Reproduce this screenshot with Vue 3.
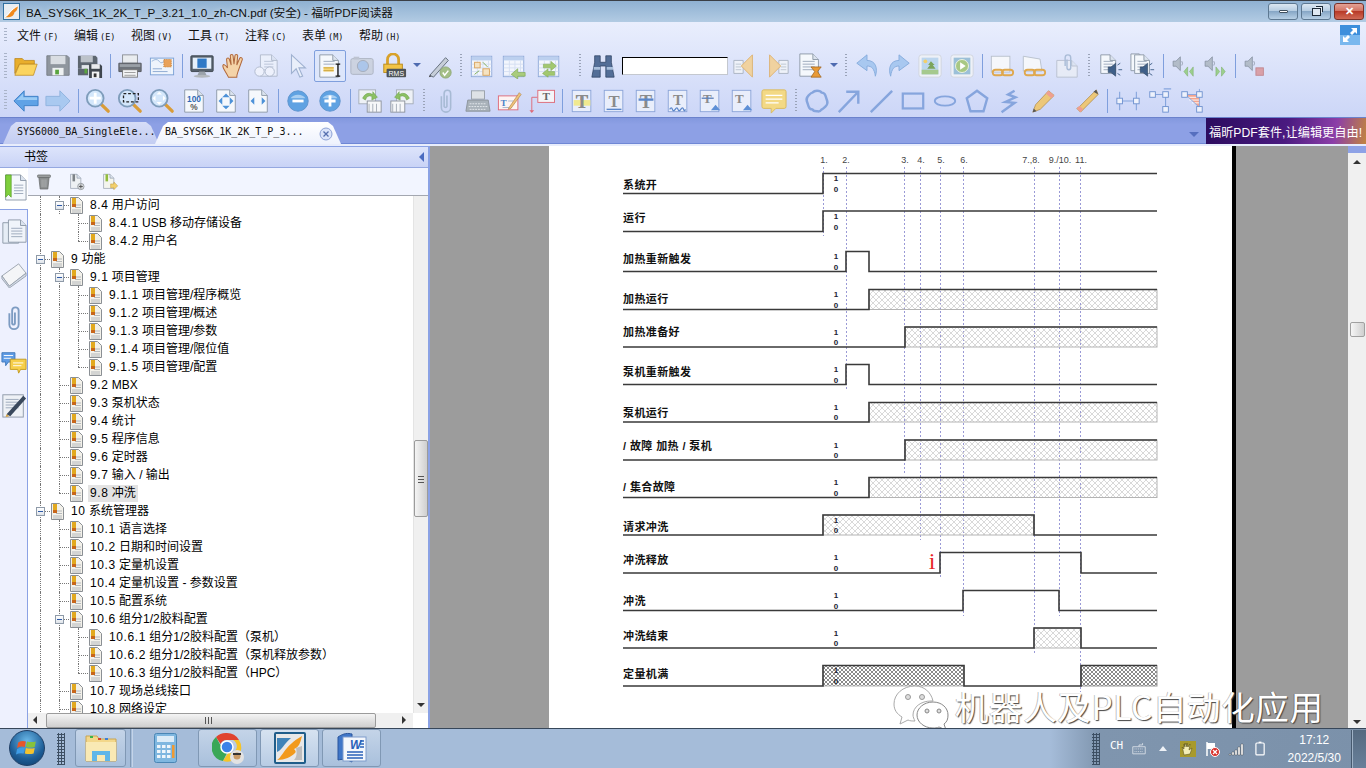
<script setup>
// --- small svg builders for the toolbar icons (28 x 28 grid)
const doc = (x, y, w, h, fill = '#f5f8fc', line = '#8d98a8') =>
  `<path d="M${x} ${y}h${w - 6}l6 6v${h - 6}h-${w}z" fill="${fill}" stroke="${line}"/><path d="M${x + w - 6} ${y}v6h6" fill="#dbe3ee" stroke="${line}"/>`
const rows = (x, y, w, n, c = '#9aa8ba', st = 3) =>
  Array.from({ length: n }, (_, i) => `<path d="M${x} ${y + i * st}h${w}" stroke="${c}"/>`).join('')
const mag = (inner = '') =>
  `<path d="M17 17l8 8" stroke="#d99c38" stroke-width="3.5" stroke-linecap="round"/><circle cx="11" cy="11" r="9" fill="#d4e7fb" stroke="#7f9dbb" stroke-width="2"/>${inner}`
const table = (extra = '') =>
  `<rect x="2.5" y="3.5" width="22" height="22" fill="#f3f6fd" stroke="#8fa9d8"/><rect x="3" y="4" width="21" height="4" fill="#bcd0ef"/>${rows(3, 12, 21, 4, '#d5dff2', 4)}<path d="M9 8v17M15 8v17M21 8v17" stroke="#d5dff2"/>${extra}`
const tbtn = (extra = '', size = 20, y = 21, x = 14) =>
  `<rect x="3.5" y="2.5" width="20" height="23" fill="#e9eefb" stroke="#8ca5d8"/><text x="${x}" y="${y}" font-size="${size}" font-family="Liberation Serif" font-weight="700" text-anchor="middle" fill="#8b8b8b">T</text>${extra}`
const circ = (c, inner) =>
  `<circle cx="14" cy="14" r="11" fill="${c}" stroke="#5d93cc"/><path d="M6 11a9 7 0 0 1 16 0z" fill="#a9cff2"/>${inner}`
const speaker = () =>
  `<g transform="translate(1 1) scale(.78)"><path d="M3 10h4l6-6v19l-6-6H3z" fill="#b2bcc8" stroke="#7f8b9a"/><path d="M15 10q2 3 0 6" stroke="#7f8b9a" fill="none"/></g>`
const pageSpeak = (x) =>
  `${doc(x, 2, 16, 20)}${rows(x + 3, 9, 10, 4)}<path d="M11 15h3l5-4v14l-5-4h-3z" fill="#3f5f88" stroke="#283d5a" stroke-width=".6"/><path d="M21 13l3-2M22 18h4M21 22l3 2" stroke="#3f5f88"/>`
const bluePath = (d, extra = '') =>
  `<path d="${d}" fill="none" stroke="#86a5dd" stroke-width="2.6" ${extra}/>`
const chain = `<rect x="4" y="18" width="11" height="6" rx="3" fill="none" stroke="#dfa84e" stroke-width="2"/><rect x="14" y="18" width="12" height="6" rx="3" fill="none" stroke="#dfa84e" stroke-width="2"/>`

const icons = {
  folder: `<path d="M2 22V6h8l2 2h11v4H7z" fill="#e8ae2c" stroke="#b98317" stroke-width=".8"/><path d="M2 24l5-12h19l-4 12z" fill="#fbd45f" stroke="#c08a1d" stroke-width=".8"/>`,
  save: `<path d="M2 3h22l2 2v19H2z" fill="#8f969e" stroke="#777e86"/><rect x="6" y="3" width="16" height="9" fill="#d9dde2"/><rect x="8" y="16" width="12" height="8" fill="#eef1f2"/><rect x="11" y="18" width="4" height="5" fill="#58a43d"/>`,
  saveall: `<path d="M1 3h19l2 2v12H1z" fill="#5d6670"/><rect x="4" y="3" width="13" height="7" fill="#bcc2c9"/><rect x="5" y="13" width="10" height="11" fill="#e2e6ea"/><path d="M1 17v7h11v-7" fill="#5d6670"/><rect x="8" y="17" width="3" height="5" fill="#5aa53e"/><path d="M13 12h12l2 2v13H13z" fill="#3f464e"/><rect x="15.5" y="12" width="9" height="5" fill="#e9ebee"/><rect x="16" y="20" width="8" height="7" fill="#f2f3f4"/><rect x="18" y="22" width="3" height="4" fill="#333"/>`,
  print: `<rect x="6" y="2" width="16" height="9" fill="#e9ecef" stroke="#8b8f95"/><path d="M2 11h24v9H2z" fill="#6f747b" stroke="#55595f"/><rect x="3" y="12" width="22" height="3" fill="#9aa0a7"/><rect x="6" y="18" width="16" height="8" fill="#f4f5f6" stroke="#777"/><path d="M8 21h12M8 24h12" stroke="#999"/>`,
  mail: `<rect x="1.5" y="5.5" width="25" height="18" fill="#eef4fc" stroke="#7ba1d4"/><path d="M3 9q5-4 8 0t6-2" fill="none" stroke="#98b3d9"/><rect x="16" y="7" width="8" height="8" fill="#e9a25a" stroke="#c87d32" stroke-dasharray="1 1"/><path d="M4 17h10M4 20h16" stroke="#8aa7d0"/>`,
  monitor: `<rect x="2" y="3" width="24" height="17" rx="1" fill="#56616c" stroke="#3f4750"/><rect x="4" y="5" width="20" height="12" fill="#e6f0fb"/><rect x="9" y="6" width="10" height="10" fill="#2f79c6"/><path d="M11 20h6l2 4H9z" fill="#9aa2aa"/><ellipse cx="14" cy="25" rx="9" ry="1.6" fill="#b3b8bd"/>`,
  hand: `<path d="M8 26C5 20 2 17 2 14s3-1 5 2L6 7c0-2 3-2 3 0l2 6-1-10c0-2 3-2 3 0l1 9 1-9c0-2 3-2 3 0l-1 10 3-7c1-2 3-1 3 1l-4 11c-1 3-2 5-2 8z" fill="#f4d3a8" stroke="#b0683c" stroke-width="1.1"/>`,
  glasses: `<g opacity=".55">${doc(8, 2, 18, 23)}${rows(12, 9, 10, 4)}<circle cx="7" cy="20" r="5" fill="#fff" stroke="#8d98a8"/><circle cx="18" cy="20" r="5" fill="#fff" stroke="#8d98a8"/></g>`,
  cursor: `<path d="M7 2l15 14h-7l4 9-3 1-4-9-5 5z" fill="#e9effa" stroke="#9fb1d0" stroke-width="1.2"/>`,
  select: `${doc(3, 2, 20, 24)}${rows(7, 9, 12, 2)}<rect x="7" y="15" width="11" height="5" fill="#f7d677"/>${rows(7, 16, 11, 2, '#c9a33d')}<path d="M20 12h5M20 25h5M22.5 12v13" stroke="#111" stroke-width="1.3"/>`,
  camera: `<g opacity=".6"><rect x="2" y="6" width="24" height="17" rx="2" fill="#c2c8d0" stroke="#8e959e"/><circle cx="15" cy="14" r="6" fill="#8db3e0" stroke="#7f8790"/><rect x="5" y="4" width="6" height="3" fill="#a8aeb6"/></g>`,
  lock: `<path d="M7 13V7a6 6 0 0 1 12 0v6" fill="none" stroke="#d8a12a" stroke-width="3"/><rect x="3" y="12" width="20" height="9" fill="#f2c345" stroke="#b98a1c"/><rect x="6" y="17" width="21" height="9" rx="1" fill="#4d5358"/><text x="16.5" y="24.6" font-size="7.5" font-family="Liberation Sans" text-anchor="middle" fill="#fff">RMS</text>`,
  pen: `<path d="M3 24L20 5l3 3L7 26z" fill="#c6ced8" stroke="#5f6a78"/><path d="M3 24l-1 2 3-1" fill="#333"/><circle cx="20" cy="21" r="6" fill="#a4bf88" stroke="#8fa874"/><path d="M17 21l2 3 4-5" fill="none" stroke="#fff" stroke-width="1.6"/>`,
  fit: table(`<rect x="6" y="10" width="6" height="6" fill="#f6e3c2" stroke="#d9a45f"/><rect x="15" y="17" width="7" height="7" fill="#f6e3c2" stroke="#d9a45f"/><path d="M15 10l5 5M6 23l5-4" stroke="#7bab52"/>`),
  addcol: table(`<path d="M26 21h-8v-4l-7 6 7 5v-3h8z" fill="#a9cc7c" stroke="#7fa854" stroke-width=".7"/>`),
  swap: table(`<path d="M8 12h8V9l6 5-6 5v-3H8zM20 20h-7v-3l-6 5 6 4v-2h7z" fill="#a2c86f" stroke="#7fa854" stroke-width=".6"/>`),
  binoc: `<path d="M5 3h6v7h6V3h6v7l3 16h-9V14h-6v12H2l3-16z" fill="#536e97" stroke="#2e4263" stroke-width=".8"/><path d="M4 15h7v3H4zM18 15h7v3h-7z" fill="#aac0dc"/>`,
  prev: `<g opacity=".9"><path d="M2 8h10v14H2z" fill="#f1f4f9" stroke="#a5afbc"/>${rows(4, 12, 6, 3, '#b9c2cd')}<path d="M22 2v24L10 14z" fill="#f3d196" stroke="#dcae66"/></g>`,
  next: `<g opacity=".9"><path d="M16 8h10v14H16z" fill="#f1f4f9" stroke="#a5afbc"/>${rows(18, 12, 6, 3, '#b9c2cd')}<path d="M6 2v24l12-12z" fill="#f3d196" stroke="#dcae66"/></g>`,
  dochour: `${doc(2, 1, 20, 24)}${rows(5, 9, 13, 4)}<path d="M14 15h11l-4 5 4 6H14l4-6z" fill="#e99a35" stroke="#9c6420" stroke-width=".8"/>`,
  undo: `<path d="M14 2L3 11l11 8v-5c5 0 8 3 9 11 3-9 0-17-9-17z" fill="#a8c8f0" stroke="#86acdc"/>`,
  redo: `<path d="M14 2l11 9-11 8v-5c-5 0-8 3-9 11-3-9 0-17 9-17z" fill="#a8c8f0" stroke="#86acdc"/>`,
  image: `<rect x="2" y="2" width="24" height="24" rx="3" fill="#eef1f7" stroke="#cfd5df"/><rect x="5" y="5" width="18" height="18" fill="#bcd6ee"/><circle cx="9" cy="9" r="2" fill="#f3cf6a"/><path d="M5 18h18v5H5z" fill="#a5c98d"/><path d="M15 9l4 4h-2l3 4h-9l3-4h-2z" fill="#7ba45b"/>`,
  play: `<rect x="2" y="2" width="24" height="24" rx="3" fill="#eef1f7" stroke="#cfd5df"/><rect x="5" y="5" width="18" height="18" fill="#9cc0d8"/><circle cx="14" cy="14" r="7" fill="#a8c884" stroke="#eef4e4"/><path d="M12 10l6 4-6 4z" fill="#fff"/>`,
  link1: `<rect x="2.5" y="3.5" width="20" height="17" fill="#f5f7fb" stroke="#b8c0cc"/>${chain}`,
  link2: `<path d="M2.500 3.500l18 3 2 13h-20z" fill="#f5f7fb" stroke="#b8c0cc"/>${chain}`,
  clipdoc: `<g opacity=".65">${doc(3, 8, 22, 18, '#eef1f5', '#a7afba')}<path d="M12 14V5a3 3 0 0 1 6 0v11a2 2 0 0 1-4 0V7" fill="none" stroke="#8ea7c4" stroke-width="1.5"/></g>`,
  speak1: pageSpeak(3),
  speak2: `${doc(1, 1, 15, 18)}${pageSpeak(5)}`,
  rew: `${speaker()}<path d="M19 15l-4 5 4 5zM25 15l-4 5 4 5z" fill="#9bcf8c" stroke="#7cae6c" stroke-width=".6"/>`,
  ffw: `${speaker()}<path d="M15 15l4 5-4 5zM21 15l4 5-4 5z" fill="#9bcf8c" stroke="#7cae6c" stroke-width=".6"/>`,
  stop: `${speaker()}<rect x="15" y="16" width="8" height="8" fill="#d9a0a8" stroke="#c28891"/>`,

  back: `<path d="M12 3L1 14l11 11v-6h15V9H12z" fill="#5fa2e6" stroke="#3f7fc6"/><path d="M11 6L4 13h22v-3H11z" fill="#9acbf5"/>`,
  fwd: `<path d="M16 3l11 11-11 11v-6H1V9h15z" fill="#a9c9f0" stroke="#8fb2de"/>`,
  zoomin: mag(`<path d="M11 5v12M5 11h12" stroke="#fff" stroke-width="3"/>`),
  marquee: mag(`<rect x="7" y="6" width="16" height="9" fill="none" stroke="#222" stroke-dasharray="3 2" stroke-width="1.4"/>`),
  zoomfit: mag(`<path d="M11 4l3 3H8zM11 18l3-3H8zM4 11l3-3v6zM18 11l-3-3v6z" fill="#fff"/>`),
  pct: `${doc(4, 2, 20, 24)}<text x="14" y="15" font-size="9" font-weight="700" font-family="Liberation Sans" text-anchor="middle" fill="#2f68b4">100</text><text x="14" y="24" font-size="9" font-weight="700" font-family="Liberation Sans" text-anchor="middle" fill="#555">%</text>`,
  fitpage: `${doc(4, 2, 20, 24)}<path d="M14 6l4 4h-8zM14 23l4-4h-8zM6 14l4-4v8zM22 14l-4-4v8z" fill="#4d92d8"/>`,
  fitwidth: `${doc(4, 2, 20, 24)}<path d="M6 14l4-4v8zM22 14l-4-4v8z" fill="#4d92d8"/>`,
  minus: circ('#5fa2e2', `<rect x="8" y="12.5" width="12" height="3" fill="#fff"/>`),
  plus: circ('#5fa2e2', `<path d="M14 8v12M8 14h12" stroke="#fff" stroke-width="3"/>`),
  exp1: `<rect x="2" y="2" width="18" height="15" fill="#eef1f6" stroke="#a5adb8"/><rect x="11" y="14" width="15" height="12" fill="#f6f7f9" stroke="#8c939c"/><path d="M13 17v9M17 17v9M21 17v9" stroke="#a5adb8"/><path d="M6 11q4-8 11-4V4l5 6-6 3V9q-5-2-7 4z" fill="#8cc064" stroke="#5f9a3e" stroke-width=".5"/>`,
  exp2: `<rect x="8" y="2" width="18" height="15" fill="#eef1f6" stroke="#a5adb8"/><rect x="2" y="14" width="15" height="12" fill="#f6f7f9" stroke="#8c939c"/><path d="M4 17v9M8 17v9M12 17v9" stroke="#a5adb8"/><path d="M22 11q-4-8-11-4V4l-5 6 6 3V9q5-2 7 4z" fill="#8cc064" stroke="#5f9a3e" stroke-width=".5"/>`,
  clip: `<path d="M9 9v12a5 5 0 0 0 10 0V6a3.500 3.500 0 0 0-7 0v14a1.600 1.600 0 0 0 3 0V8" fill="none" stroke="#a7bad4" stroke-width="1.7"/>`,
  typewriter: `<rect x="7" y="3" width="14" height="9" fill="#dee2e6" stroke="#98a0a8"/><path d="M3 13h22l2 12H1z" fill="#a9b2ba" stroke="#8b949c"/><path d="M5 17h18M4 20h20M5 23h18" stroke="#e6ebee" stroke-dasharray="2 1"/>`,
  textbox: `<rect x="1.5" y="8.5" width="21" height="15" fill="#fdf4f3" stroke="#dd6a78"/><text x="7" y="19" font-size="10" font-weight="700" font-family="Liberation Serif" text-anchor="middle" fill="#4d83c9">T</text><path d="M12 14h6M6 21h10" stroke="#a8b7cc"/><path d="M13 21L24 5l2 2-11 15-3 1z" fill="#efc27a" stroke="#a87a3a" stroke-width=".6"/>`,
  callout: `<rect x="9.5" y="2.5" width="18" height="13" fill="#f4f5f8" stroke="#dd6a78"/><text x="18.5" y="13" font-size="12" font-weight="700" font-family="Liberation Serif" text-anchor="middle" fill="#666">T</text><path d="M9 10H3v15" fill="none" stroke="#dd6a78"/><path d="M0.5 24h5l-2.5 3z" fill="#dd6a78"/>`,
  t1: tbtn(`<rect x="5" y="13" width="18" height="6" fill="#f1e77c" opacity=".85"/><text x="14" y="21" font-size="20" font-family="Liberation Serif" font-weight="700" text-anchor="middle" fill="#8b8b8b">T</text>`),
  t2: tbtn(`<path d="M6 23h16" stroke="#5b86c9" stroke-width="1.5"/>`, 18, 20),
  t3: tbtn(`<path d="M6 12.5h16" stroke="#5b86c9" stroke-width="2.5"/>`),
  t4: tbtn(`<path d="M5 23q2-3 3 0t3 0 3 0 3 0 3 0 2 0" fill="none" stroke="#5b86c9" stroke-width="1.4"/>`, 16, 18),
  t5: tbtn(`<path d="M5 11h13" stroke="#5b7fb8" stroke-width="1.4"/><path d="M15 24l5-6 5 6z" fill="#5d8fd6"/>`, 14, 16, 11),
  t6: tbtn(`<path d="M15 24l5-6 5 6z" fill="#5d8fd6"/>`, 14, 16, 11),
  note: `<path d="M3 2h22a2 2 0 0 1 2 2v16a2 2 0 0 1-2 2h-9l-5 5v-5H3a2 2 0 0 1-2-2V4a2 2 0 0 1 2-2z" fill="#f3d985" stroke="#d8b95f"/><path d="M5 8h18M5 12h18M5 16h14" stroke="#fff" stroke-width="1.4"/>`,
  cloud: `<path d="M14 3q4 0 5 2 3 0 4 3t2 6q1 3-2 6t-4 3q-2 3-5 2-4 0-5-2-3 0-4-3T3 14q-1-3 2-6t4-3q2-2 5-2z" fill="none" stroke="#86a5dd" stroke-width="2.6"/>`,
  arrow: bluePath('M3 26L24 4M11 4h13v13'),
  line: bluePath('M3 26L26 3'),
  rect: `<rect x="3" y="6" width="22" height="16" fill="none" stroke="#86a5dd" stroke-width="2.4"/>`,
  ellipse: `<ellipse cx="14" cy="14" rx="11" ry="5" fill="none" stroke="#86a5dd" stroke-width="2"/>`,
  pentagon: bluePath('M14 3l11 8-4 14H7L3 11z'),
  zig: `<path d="M6 26l14-10-10-1 11-5-8-3 7-4" fill="none" stroke="#86a5dd" stroke-width="2.6"/>`,
  pencil: `<path d="M3 26l3-8L20 3l6 5-15 15z" fill="#ecc778" stroke="#a7803c" stroke-width=".7"/><path d="M20 3l6 5-3 3-6-5z" fill="#ef9f90"/><path d="M3 26l1-4 3 3z" fill="#555"/>`,
  pencil2: `<path d="M3 22l4 4L26 7l-2-5L6 20z" fill="#ecc778" stroke="#a7803c" stroke-width=".7"/><path d="M3 22l4 4 3-3-4-4z" fill="#ef9f90"/><path d="M26 7l-2-5-3 2z" fill="#555"/>`,
  dist: `<path d="M5 4v20M23 4v20M7 14h14" stroke="#86a5dd" stroke-width="1.2"/><rect x="2" y="11" width="6" height="6" fill="#eef2fc" stroke="#6f92cf"/><rect x="20" y="11" width="6" height="6" fill="#eef2fc" stroke="#6f92cf"/>`,
  perim: `<path d="M6 7h15M18 1h8M20 7v16" stroke="#86a5dd" stroke-width="1.2"/><rect x="3" y="4" width="6" height="6" fill="#eef2fc" stroke="#6f92cf"/><rect x="17" y="4" width="6" height="6" fill="#eef2fc" stroke="#6f92cf"/><rect x="17" y="20" width="6" height="6" fill="#eef2fc" stroke="#6f92cf"/>`,
  area: `<path d="M7 7h15v14z" fill="#f3a48f"/><path d="M8 10h14M11 13h11M14 16h8" stroke="#fff"/><path d="M7 7h15M22 1v21M7 7l15 14" stroke="#86a5dd"/><rect x="3" y="4" width="6" height="6" fill="#eef2fc" stroke="#6f92cf"/><rect x="19" y="4" width="6" height="6" fill="#eef2fc" stroke="#6f92cf"/><rect x="19" y="20" width="6" height="6" fill="#eef2fc" stroke="#6f92cf"/>`,
  trash: `<path d="M6 7h16l-2 18H8z" fill="#8b8e8f" stroke="#5f6263"/><rect x="4" y="3" width="20" height="4" rx="1" fill="#9a9d9e" stroke="#5f6263"/><path d="M11 10v12M14 10v12M17 10v12" stroke="#bfc2c3"/>`,
  bmAdd: `${doc(4, 2, 16, 22, '#eef1f4')}<rect x="7" y="2" width="4" height="11" fill="#7c8287"/><circle cx="20" cy="21" r="5" fill="#d5d8dc" stroke="#80868c"/><path d="M20 18v6M17 21h6" stroke="#555" stroke-width="1.5"/>`,
  bmGo: `${doc(4, 2, 16, 22, '#f4f5ee')}<rect x="7" y="2" width="4" height="11" fill="#92bd3e"/><path d="M15 17h5v-3l6 6-6 6v-3h-5z" fill="#f3cf6c" stroke="#b7922e" stroke-width=".7"/>`,
  railBm: `${doc(5, 1, 22, 27)}${rows(14, 12, 10, 4)}<path d="M5 1h6v24l-3-3-3 3z" fill="#7fcf3d" stroke="#4f9a1c" stroke-width=".7"/>`,
  railPages: `${doc(2, 4, 17, 22, '#e6edf6')}${doc(8, 1, 19, 24, '#f0f4fa')}${rows(11, 10, 12, 4)}`,
  railLayers: `<path d="M1 15L19 2l8 10-18 14z" fill="#f4f5f7" stroke="#9aa3ae"/><path d="M1 15l8 11 18-14v3L9 28 1 18z" fill="#d5ddea" stroke="#9aa3ae"/>`,
  railClip: `<path d="M9 9v12a5 5 0 0 0 10 0V6a3.500 3.500 0 0 0-7 0v14a1.600 1.600 0 0 0 3 0V8" fill="none" stroke="#7d9cc2" stroke-width="2"/>`,
  railNote: `<path d="M1 4h14v10H8l-3 4v-4H1z" fill="#5f9ce6" stroke="#3f78bb"/><path d="M3 7h10M3 10h8" stroke="#fff"/><path d="M10 11h17v11h-6l-2 4-1-4h-8z" fill="#f6cf4a" stroke="#c49a1f"/><path d="M13 15h11M13 18h9" stroke="#fff"/>`,
  railEdit: `<rect x="2" y="3" width="22" height="24" fill="#eef1f6" stroke="#8d98a8"/>${rows(5, 8, 14, 4)}<path d="M6 24L24 4l3 3L10 26z" fill="#39485c"/><path d="M6 24l-1 3 4-1z" fill="#d6a03a"/>`,
}

const I = (i) => ({ i })
const gap = (w) => ({ gap: w })
const sep = { sep: true }
const dots = (w) => ({ dots: true, w })
const caret = { caret: true }

const toolbarOne = [
  I('folder'), I('save'), I('saveall'), sep, I('print'), I('mail'), sep, I('monitor'), I('hand'), I('glasses'), I('cursor'),
  { i: 'select', on: true }, I('camera'), I('lock'), caret, I('pen'), dots(10), I('fit'), I('addcol'), gap(3), I('swap'),
  gap(8), dots(14), I('binoc'), { input: true }, gap(1), I('prev'), I('next'), gap(2), I('dochour'), caret, dots(10), I('undo'), I('redo'),
  gap(-1), I('image'), I('play'), sep, I('link1'), I('link2'), gap(1), I('clipdoc'), dots(12), I('speak1'), I('speak2'),
  sep, I('rew'), I('ffw'), sep, I('stop'),
]
const toolbarTwo = [
  I('back'), I('fwd'), sep, I('zoomin'), I('marquee'), I('zoomfit'), I('pct'), I('fitpage'), I('fitwidth'), sep, I('minus'), I('plus'),
  sep, I('exp1'), I('exp2'), dots(12), I('clip'), I('typewriter'), I('textbox'), I('callout'), sep, I('t1'), I('t2'), I('t3'), I('t4'),
  I('t5'), I('t6'), I('note'), dots(11), I('cloud'), I('arrow'), I('line'), I('rect'), I('ellipse'), I('pentagon'), I('zig'), gap(2),
  I('pencil'), gap(12), I('pencil2'), sep, gap(1), I('dist'), I('perim'), I('area'),
]

const menus = [['文件', '(F)'], ['编辑', '(E)'], ['视图', '(V)'], ['工具', '(T)'], ['注释', '(C)'], ['表单', '(M)'], ['帮助', '(H)']]

const railItems = ['railPages', 'railLayers', 'railClip', 'railNote', 'railEdit']

// g = tree guide cells: l line, t tee, e end, b expanded box, n nothing
const tree = [
  { t: '8.4 用户访问', g: 'lb' },
  { t: '8.4.1 USB 移动存储设备', g: 'lnt' },
  { t: '8.4.2 用户名', g: 'lne' },
  { t: '9 功能', g: 'b' },
  { t: '9.1 项目管理', g: 'lb' },
  { t: '9.1.1 项目管理/程序概览', g: 'llt' },
  { t: '9.1.2 项目管理/概述', g: 'llt' },
  { t: '9.1.3 项目管理/参数', g: 'llt' },
  { t: '9.1.4 项目管理/限位值', g: 'llt' },
  { t: '9.1.5 项目管理/配置', g: 'lle' },
  { t: '9.2 MBX', g: 'lt' },
  { t: '9.3 泵机状态', g: 'lt' },
  { t: '9.4 统计', g: 'lt' },
  { t: '9.5 程序信息', g: 'lt' },
  { t: '9.6 定时器', g: 'lt' },
  { t: '9.7 输入 / 输出', g: 'lt' },
  { t: '9.8 冲洗', g: 'le', on: true },
  { t: '10 系统管理器', g: 'b' },
  { t: '10.1 语言选择', g: 'lt' },
  { t: '10.2 日期和时间设置', g: 'lt' },
  { t: '10.3 定量机设置', g: 'lt' },
  { t: '10.4 定量机设置 - 参数设置', g: 'lt' },
  { t: '10.5 配置系统', g: 'lt' },
  { t: '10.6 组分1/2胶料配置', g: 'lb' },
  { t: '10.6.1 组分1/2胶料配置（泵机）', g: 'llt' },
  { t: '10.6.2 组分1/2胶料配置（泵机释放参数）', g: 'llt' },
  { t: '10.6.3 组分1/2胶料配置（HPC）', g: 'lle' },
  { t: '10.7 现场总线接口', g: 'lt' },
  { t: '10.8 网络设定', g: 'lt' },
].map((r) => {
  const num = r.t.split(' ')[0]
  return { ...r, num, rest: r.t.slice(num.length) }
})

// timing chart, drawn in screen coordinates through the viewBox
const wave = (hi, lo, edges) => {
  let d = `M623 ${lo}`
  let up = false
  for (const x of edges) {
    d += `H${x}V${up ? lo : hi}`
    up = !up
  }
  return d + 'H1157'
}
const signals = [
  { label: '系统开', ly: 184, hi: 173.5, lo: 193.5, e: [823] },
  { label: '运行', ly: 217, hi: 211, lo: 231.5, e: [823] },
  { label: '加热重新触发', ly: 258, hi: 251.5, lo: 271.5, e: [846, 869] },
  { label: '加热运行', ly: 298, hi: 289.5, lo: 309.5, e: [869], h: [869, 1157] },
  { label: '加热准备好', ly: 331, hi: 327, lo: 347, e: [905], h: [905, 1157] },
  { label: '泵机重新触发', ly: 371, hi: 364.5, lo: 384.5, e: [846, 869] },
  { label: '泵机运行', ly: 412, hi: 402.5, lo: 422, e: [869], h: [869, 1157] },
  { label: '/ 故障 加热 / 泵机', ly: 445, hi: 440, lo: 460, e: [905], h: [905, 1157] },
  { label: '/ 集合故障', ly: 486, hi: 477.5, lo: 497.5, e: [869], h: [869, 1157] },
  { label: '请求冲洗', ly: 526, hi: 515, lo: 535, e: [823, 1034], h: [823, 1034] },
  { label: '冲洗释放', ly: 559, hi: 552.5, lo: 573, e: [940, 1081] },
  { label: '冲洗', ly: 600, hi: 590.5, lo: 610.5, e: [963, 1059] },
  { label: '冲洗结束', ly: 635, hi: 628, lo: 648, e: [1034, 1081], h: [1034, 1081] },
  { label: '定量机满', ly: 673, hi: 665.5, lo: 686, e: [823, 964, 1081], h: [823, 964], h2: [1081, 1157], dense: true },
].map((s) => ({ ...s, d: wave(s.hi, s.lo, s.e) }))

const markers = [
  { x: 823.5, end: 236, t: '1.', tx: 824 },
  { x: 846.5, end: 390, t: '2.', tx: 846 },
  { x: 904.5, end: 473, t: '3.', tx: 905 },
  { x: 920.5, end: 540, t: '4.', tx: 921 },
  { x: 940.5, end: 579, t: '5.', tx: 941 },
  { x: 963.5, end: 616, t: '6.', tx: 964 },
  { x: 1034.5, end: 653, t: '7.,8.', tx: 1031 },
  { x: 1059.5, end: 616, t: '9./10.', tx: 1060 },
  { x: 1080.5, end: 692, t: '11.', tx: 1081 },
]
</script>

<template>
  <div class="app">
    <div class="titlebar">
      <svg class="appicon" viewBox="0 0 18 18">
        <rect x=".5" y=".5" width="17" height="17" fill="#e9eef2" stroke="#2a6a9c" />
        <path d="M2 15C6 15 7 8 16 3c-1 5-2 6-4 7 0 3-4 6-10 5z" fill="#f08a1d" />
        <path d="M2 15C6 12 8 7 16 3" fill="none" stroke="#fff" stroke-width="1" />
      </svg>
      <span class="title">BA_SYS6K_1K_2K_T_P_3.21_1.0_zh-CN.pdf (安全) - 福昕PDF阅读器</span>
      <div class="winbtns">
        <button class="wb"><i class="minbar"></i></button>
        <button class="wb"><i class="restore"></i></button>
        <button class="wb close"><span>✕</span></button>
      </div>
    </div>

    <div class="toolbars">
      <div class="menubar">
        <i class="grip"></i>
        <div v-for="m in menus" :key="m[0]" class="menu">{{ m[0] }}<small>{{ m[1] }}</small></div>
        <div class="expand">
          <svg viewBox="0 0 20 20" width="20" height="20">
            <rect width="20" height="20" fill="#3d8fdc" />
            <rect y="10" width="20" height="10" fill="#7ab8ee" />
            <path d="M11 3h6v6l-2-2-3 3-2-2 3-3zM9 17H3v-6l2 2 3-3 2 2-3 3z" fill="#fff" />
          </svg>
        </div>
      </div>

      <div v-for="(bar, n) in [toolbarOne, toolbarTwo]" :key="n" class="toolbar" :class="n ? 'two' : 'one'">
        <i class="grip"></i>
        <template v-for="(it, k) in bar" :key="k">
          <div v-if="it.i" class="tool" :class="{ on: it.on }"><svg viewBox="0 0 28 28" width="26" height="26" v-html="icons[it.i]"></svg></div>
          <i v-else-if="it.sep" class="sep"></i>
          <i v-else-if="it.dots" class="tdots" :style="{ width: it.w + 'px' }"></i>
          <i v-else-if="it.caret" class="caret"></i>
          <div v-else-if="it.input" class="findbox"></div>
          <i v-else class="tgap" :style="{ marginLeft: it.gap + 'px' }"></i>
        </template>
      </div>
    </div>

    <div class="tabbar">
      <div class="tab">SYS6000_BA_SingleEle...</div>
      <div class="tab active">
        BA_SYS6K_1K_2K_T_P_3...
        <svg class="tabx" viewBox="0 0 14 14" width="14" height="14">
          <circle cx="7" cy="7" r="6" fill="#dbe4fa" stroke="#8ea3d6" />
          <path d="M4.500 4.500l5 5M9.500 4.500l-5 5" stroke="#556fae" stroke-width="1.3" />
        </svg>
      </div>
      <i class="tabmore"></i>
      <div class="promo">福昕PDF套件,让编辑更自由!</div>
    </div>

    <div class="main">
      <aside class="side">
        <div class="sidehead">
          <span>书签</span>
          <i class="collapse"></i>
        </div>
        <div class="sidebody">
          <div class="rail">
            <div class="railtab"><svg viewBox="0 0 28 28" width="26" height="28" v-html="icons.railBm"></svg></div>
            <div v-for="r in railItems" :key="r" class="railitem"><svg viewBox="0 0 28 28" width="26" height="26" v-html="icons[r]"></svg></div>
          </div>
          <div class="panel">
            <div class="paneltools">
              <svg viewBox="0 0 28 28" width="18" height="18" v-html="icons.trash"></svg>
              <svg viewBox="0 0 28 28" width="18" height="18" v-html="icons.bmAdd"></svg>
              <svg viewBox="0 0 28 28" width="18" height="18" v-html="icons.bmGo"></svg>
            </div>
            <div class="treewrap">
              <div class="tree">
                <div v-for="row in tree" :key="row.t" class="row">
                  <i v-for="(c, k) in row.g" :key="k" class="cell" :class="'c-' + c"><b v-if="c === 'b'"></b></i>
                  <svg class="bm" viewBox="0 0 13 17" width="13" height="17">
                    <path d="M.5.5h8l4 4v12H.5z" fill="#f3f1ea" stroke="#8a8f94" />
                    <path d="M5 8h6M5 10.500h6M2 13h9M2 15h9" stroke="#b4b8bc" />
                    <rect x="2" y="1" width="4" height="9" fill="#e2a91f" />
                    <rect x="2" y="7" width="4" height="3" fill="#c8661a" />
                  </svg>
                  <span class="label" :class="{ on: row.on }"><span class="num">{{ row.num }}</span>{{ row.rest }}</span>
                </div>
              </div>
              <div class="vbar">
                <i class="thumb-v"></i>
                <i class="arr-down"></i>
              </div>
            </div>
            <div class="hbar">
              <i class="arr-left"></i>
              <i class="thumb-h"></i>
              <i class="arr-right"></i>
            </div>
          </div>
        </div>
      </aside>

      <div class="docarea">
        <div class="gutter left"></div>
        <div class="page">
          <svg class="chart" viewBox="549 146 683 582" width="683" height="582">
            <defs>
              <pattern id="hatch" width="6" height="6" patternUnits="userSpaceOnUse">
                <path d="M0 0l6 6M6 0L0 6" stroke="#cfcfcf" stroke-width=".8" />
              </pattern>
              <pattern id="hatchDense" width="4" height="4" patternUnits="userSpaceOnUse">
                <path d="M0 0l4 4M4 0L0 4" stroke="#8a8a8a" stroke-width="1" />
              </pattern>
            </defs>
            <g v-for="m in markers" :key="m.t">
              <path :d="`M${m.x} 167V${m.end}`" class="mark" />
              <text :x="m.tx" y="163" class="marktext">{{ m.t }}</text>
            </g>
            <g v-for="s in signals" :key="s.label">
              <rect
                v-if="s.h"
                :x="s.h[0]"
                :y="s.hi"
                :width="s.h[1] - s.h[0]"
                :height="s.lo - s.hi"
                :fill="s.dense ? 'url(#hatchDense)' : 'url(#hatch)'"
                stroke="#b4b4b4"
              />
              <rect
                v-if="s.h2"
                :x="s.h2[0]"
                :y="s.hi"
                :width="s.h2[1] - s.h2[0]"
                :height="s.lo - s.hi"
                fill="url(#hatchDense)"
                stroke="#999"
              />
              <path :d="s.d" class="trace" />
              <text x="623" :y="s.ly + 5" class="siglabel">{{ s.label }}</text>
              <text x="836" :y="s.hi + 7.5" class="bit">1</text>
              <text x="836" :y="s.lo - 2" class="bit">0</text>
            </g>
            <text x="932" y="569" class="redi">i</text>
          </svg>
        </div>
        <div class="blackline"></div>
        <div class="gutter right"></div>
        <div class="docscroll">
          <i class="topcap"></i>
          <i class="arr-up"></i>
          <i class="thumb-doc"></i>
          <i class="arr-down big"></i>
        </div>

        <div class="watermark">
          <svg viewBox="0 0 56 46" width="56" height="46">
            <path d="M22 2C10 2 1 10 1 20c0 6 3 10 8 13l-2 7 8-4c2 1 4 1 7 1-1-2-2-4-2-6 0-8 8-14 18-14h2C38 8 31 2 22 2z" fill="#fff" stroke="#aaa" />
            <path d="M40 18c-9 0-16 6-16 13s7 13 16 13c2 0 4 0 6-1l7 3-2-6c3-2 4-5 4-9 0-7-6-13-15-13z" fill="#fff" stroke="#888" />
            <circle cx="15" cy="13" r="2.5" fill="#ddd" stroke="#999" /><circle cx="29" cy="13" r="2.5" fill="#ddd" stroke="#999" />
            <circle cx="34" cy="27" r="2" fill="#ddd" stroke="#888" /><circle cx="46" cy="27" r="2" fill="#ddd" stroke="#888" />
          </svg>
          <span>机器人及PLC自动化应用</span>
        </div>
      </div>
    </div>

    <footer class="taskbar">
      <div class="orb">
        <svg viewBox="0 0 20 20" width="22" height="22">
          <path d="M2 5q3-2 7-1l-1 5q-4-1-7 1z" fill="#e8562a" />
          <path d="M10 4q4 1 8 0l-1 5q-4 1-8 0z" fill="#86c23c" />
          <path d="M1 11q3-2 7-1l-1 5q-4-1-7 1z" fill="#3f9ce6" />
          <path d="M9 10q4 1 8 0l-1 5q-4 1-8 0z" fill="#f4c32e" />
        </svg>
      </div>
      <i class="tbdots"></i>
      <div class="tbtn wide">
        <svg viewBox="0 0 34 30" width="34" height="30">
          <path d="M2 7V3h11l2 3h17v22H2z" fill="#f3d78a" stroke="#c8a453" />
          <rect x="6" y="3" width="3" height="2" fill="#3cb44a" /><rect x="14" y="5" width="3" height="2" fill="#d9442e" /><rect x="21" y="5" width="3" height="2" fill="#3c7fd9" />
          <path d="M2 9h30v19H2z" fill="#f9e9b4" />
          <path d="M8 28V18h18v10h-5v-6h-8v6z" fill="#5fb6e8" />
        </svg>
      </div>
      <i class="tbsep"></i>
      <div class="tbtn plain">
        <svg viewBox="0 0 24 30" width="24" height="30">
          <rect x=".5" y=".5" width="22" height="29" rx="2" fill="#7fb7e0" stroke="#4a86b5" />
          <rect x="3" y="3" width="17" height="6" fill="#dcecf8" />
          <g fill="#f0f6fb"><rect x="3" y="12" width="3.5" height="3" /><rect x="8" y="12" width="3.5" height="3" /><rect x="13" y="12" width="3.5" height="3" /><rect x="3" y="17" width="3.5" height="3" /><rect x="8" y="17" width="3.5" height="3" /><rect x="13" y="17" width="3.5" height="3" /><rect x="3" y="22" width="3.5" height="3" /><rect x="8" y="22" width="3.5" height="3" /><rect x="13" y="22" width="3.5" height="3" /></g>
          <rect x="18" y="12" width="2.5" height="13" fill="#f09a32" />
        </svg>
      </div>
      <div class="tbtn">
        <svg viewBox="0 0 32 32" width="32" height="32">
          <path d="M15 1A14 14 0 0 1 27 8H15a7 7 0 0 0-6.500 4L4 5A14 14 0 0 1 15 1z" fill="#e0432f" />
          <path d="M4 5l6 11a6 6 0 0 0 5 5l-4 8A14 14 0 0 1 4 5z" fill="#3aa757" />
          <path d="M27 8a14 14 0 0 1-16 21l5-8a7 7 0 0 0 5-13z" fill="#f6c428" />
          <circle cx="15" cy="15" r="6" fill="#3c82e8" stroke="#fff" stroke-width="1.5" />
          <circle cx="25" cy="25" r="7" fill="#e2e2e2" />
          <circle cx="25" cy="24" r="3.500" fill="#c99a66" />
          <rect x="21" y="21" width="8" height="2" fill="#333" />
        </svg>
      </div>
      <div class="tbtn active">
        <svg viewBox="0 0 32 32" width="32" height="32">
          <rect x="1" y="1" width="30" height="30" rx="1" fill="#e8e8e8" stroke="#1f5d8a" stroke-width="2" />
          <path d="M3 28C8 26 10 14 28 4c-2 8-3 11-8 13 2 2 2 3 1 4-4 4-10 7-18 7z" fill="#f29a1c" />
          <path d="M3 20c4-1 7-8 14-14H3z" fill="#3f83b8" />
          <path d="M22 16l6-2v14h-8c3-3 3-8 2-12z" fill="#bdbdbd" />
        </svg>
      </div>
      <div class="tbtn">
        <svg viewBox="0 0 32 32" width="32" height="32">
          <path d="M2 5C8 1 12 1 16 2v28C10 27 6 27 2 28z" fill="#3f76c8" stroke="#2a559c" />
          <rect x="7" y="5" width="23" height="24" fill="#f4f7fc" stroke="#7e9ccb" />
          <text x="14" y="17" font-size="12" font-weight="700" font-style="italic" font-family="Liberation Sans" fill="#2a62b8">W</text>
          <path d="M11 20h16M11 23h16M11 26h16M24 9h4M24 12h4M24 15h4" stroke="#2a62b8" stroke-width="1.4" />
        </svg>
      </div>

      <div class="tray">
        <i class="tbdots"></i>
        <span class="ch">CH</span>
        <svg viewBox="0 0 18 14" width="16" height="13">
          <path d="M2 5h14v8H2zM9 5V3h4V1" fill="none" stroke="#d8dee6" />
          <path d="M4 7.500h10M4 10.500h10" stroke="#d8dee6" stroke-dasharray="1 1" />
        </svg>
        <i class="trayup"></i>
        <svg viewBox="0 0 16 16" width="16" height="16">
          <rect width="16" height="16" fill="#a89a2c" />
          <path d="M4 14L3 9 2 6l2 2V3l1 3V2l2 4V2l1 4 2-3-1 6 3-2-2 6z" fill="#f4eeb4" stroke="#4d4618" stroke-width=".5" />
        </svg>
        <svg viewBox="0 0 16 16" width="16" height="16">
          <path d="M3 1v14" stroke="#fff" stroke-width="1.500" />
          <path d="M3 2h8v6H3z" fill="#fff" />
          <circle cx="11" cy="11" r="4.500" fill="#d9302a" stroke="#fff" />
          <path d="M9 9l4 4M13 9l-4 4" stroke="#fff" stroke-width="1.300" />
        </svg>
        <svg viewBox="0 0 16 14" width="16" height="14">
          <path d="M1 12h2v1H1zM4 10h2v3H4zM7 8h2v5H7zM10 5h2v8h-2zM13 2h2v11h-2z" fill="#fff" stroke="#444" stroke-width=".4" />
        </svg>
        <svg class="battery" viewBox="0 0 12 16" width="11" height="15">
          <rect x="1" y="2" width="9" height="13" rx="1" fill="none" stroke="#fff" stroke-width="1.300" />
          <rect x="4" y="0.500" width="3" height="1.500" fill="#fff" />
        </svg>
        <div class="clock">
          <div>17:12</div>
          <div>2022/5/30</div>
        </div>
        <i class="showdesk"></i>
      </div>
    </footer>
  </div>
</template>

<style scoped>
.app {
  width: 1366px;
  height: 768px;
  display: flex;
  flex-direction: column;
  overflow: hidden;
  font-family: "Liberation Sans", "Noto Sans CJK SC", sans-serif;
  font-size: 12px;
  color: #000;
  background: #fff;
}
i { display: block; font-style: normal; }

.titlebar {
  height: 22px;
  flex: none;
  display: flex;
  align-items: center;
  box-sizing: border-box;
  border-top: 1px solid #3a3f46;
  padding-left: 2px;
  background: linear-gradient(#8fb1d2, #b2cbe3);
}
.appicon { width: 17px; height: 17px; margin-left: 1px; }
.title {
  margin-left: 6px;
  font-size: 11.7px;
  color: #101010;
  text-shadow: 0 0 6px rgba(255, 255, 255, .6);
  white-space: nowrap;
}
.winbtns { margin-left: auto; margin-right: 2px; display: flex; gap: 3px; }
.wb {
  width: 30px;
  height: 17px;
  padding: 0;
  box-sizing: border-box;
  display: flex;
  align-items: center;
  justify-content: center;
  border: 1px solid #5d7891;
  border-radius: 3px;
  background: linear-gradient(#dbe7f2 0, #b6cde2 45%, #87a7c6 50%, #b8d0e6 100%);
}
.wb.close {
  border-color: #7a3128;
  background: linear-gradient(#e4a295 0, #d27464 45%, #b83a28 50%, #d06a55 100%);
  color: #fff;
  font-size: 11px;
  font-weight: 700;
  line-height: 1;
}
.minbar { width: 9px; height: 3px; background: #fff; border: 1px solid #40505f; box-sizing: border-box; border-radius: 1px; }
.restore { width: 9px; height: 8px; border: 1px solid #1d2a38; box-shadow: 2px -2px 0 -1px #e8f0f7, 3px -3px 0 -1px #1d2a38; box-sizing: border-box; background: #dfe9f3; }

.toolbars {
  flex: none;
  background: linear-gradient(#e9eefd, #ccd6f7);
  border-bottom: 1px solid #6b82cc;
}
.menubar { height: 25px; display: flex; align-items: center; padding-left: 10px; position: relative; }
.grip {
  position: absolute;
  left: 4px;
  top: 6px;
  bottom: 6px;
  width: 3px;
  background: repeating-linear-gradient(#a9b3c8 0 1px, transparent 1px 3px);
}
.menu { width: 57px; padding-left: 7px; box-sizing: border-box; font-size: 12px; white-space: nowrap; color: #111; }
.menu small { font-family: "DejaVu Sans Mono", monospace; font-size: 8.5px; margin-left: 2px; }
.expand { position: absolute; right: 6px; top: 3px; height: 20px; }

.toolbar { display: flex; align-items: center; padding-left: 10px; position: relative; }
.toolbar.one { height: 37px; }
.toolbar.two { height: 33px; }
.tool {
  width: 32px;
  height: 32px;
  flex: none;
  display: flex;
  align-items: center;
  justify-content: center;
  box-sizing: border-box;
}
.tool.on { border: 1px solid #7f9fdd; border-radius: 2px; background: #dde6fb; }
.sep { width: 8px; height: 24px; flex: none; background: linear-gradient(#7f9fdd, #7f9fdd) center / 1px 100% no-repeat; }
.tdots {
  flex: none;
  height: 24px;
  background: repeating-linear-gradient(#9aa3b8 0 1px, transparent 1px 3px) center / 2px 100% no-repeat;
}
.caret { flex: none; width: 14px; height: 5px; position: relative; }
.caret::after {
  content: "";
  position: absolute;
  left: 3px;
  top: 0;
  border: 4px solid transparent;
  border-top: 4px solid #4e6bb0;
  border-bottom: 0;
}
.tgap { flex: none; width: 0; }
.findbox {
  flex: none;
  width: 106px;
  height: 18px;
  margin-left: 3px;
  box-sizing: border-box;
  background: #fff;
  border: 1px solid #c4c8cf;
  border-top: 1px solid #000;
  border-left: 1px solid #000;
}

.tabbar {
  height: 28px;
  flex: none;
  display: flex;
  position: relative;
  box-sizing: border-box;
  background: linear-gradient(#8398de, #8da0e5 25%);
  border-bottom: 2px solid #e8edfc;
  box-shadow: inset 0 -1px 0 #6f87d5;
  padding-top: 4px;
  padding-left: 3px;
}
.tab {
  position: relative;
  z-index: 0;
  width: 156px;
  height: 22px;
  padding: 4px 0 0 14px;
  box-sizing: border-box;
  font-family: "DejaVu Sans Mono", monospace;
  font-size: 10px;
  white-space: nowrap;
  color: #111;
}
.tab::before {
  content: "";
  position: absolute;
  inset: 0;
  z-index: -1;
  clip-path: polygon(0 100%, 8px 4px, 13px 0, calc(100% - 13px) 0, calc(100% - 8px) 4px, 100% 100%);
  background: linear-gradient(#d6ddf7, #c3cdf2);
}
.tab.active { width: 186px; margin-left: -4px; padding-left: 10px; z-index: 1; }
.tab.active::before { background: linear-gradient(#fff, #eef2fd); }
.tabx { position: absolute; left: 164px; top: 5px; }
.tabmore {
  position: absolute;
  left: 1189px;
  top: 14px;
  border: 5px solid transparent;
  border-top: 5px solid #566fbf;
  border-bottom: 0;
}
.promo {
  position: absolute;
  right: 0;
  top: 0;
  width: 160px;
  height: 26px;
  box-sizing: border-box;
  padding: 5px 0 0 3px;
  background: linear-gradient(100deg, #2b0c5e 0, #4a1a80 50%, #8c3ea8 80%, #c1843f 100%);
  color: #fff;
  font-size: 12.2px;
  white-space: nowrap;
  overflow: hidden;
}

.main { flex: none; height: 582px; display: flex; }
.side { width: 430px; flex: none; display: flex; flex-direction: column; background: #eef1fe; border-right: 2px solid #8ba2e4; box-sizing: border-box; }
.sidehead {
  height: 22px;
  flex: none;
  display: flex;
  align-items: center;
  padding: 0 0 3px 24px;
  font-size: 12px;
  position: relative;
  box-sizing: border-box;
  background: linear-gradient(#dde4fb, #c9d3f6);
  border-bottom: 1px solid #95a8e0;
  border-top: 1px solid #8ba2e4;
}
.collapse {
  position: absolute;
  right: 4px;
  top: 5px;
  border: 5px solid transparent;
  border-right: 5px solid #4a6bc0;
  border-left: 0;
}
.sidebody { flex: 1; display: flex; min-height: 0; }
.rail { width: 27px; flex: none; border-right: 1px solid #8ba2e4; box-sizing: content-box; }
.railtab {
  width: 28px;
  height: 42px;
  background: #fff;
  display: flex;
  align-items: center;
  justify-content: center;
  box-sizing: border-box;
  border-bottom: 1px solid #8ba2e4;
  padding-bottom: 3px;
}
.railitem { height: 43.4px; display: flex; align-items: center; justify-content: center; }
.panel { flex: 1; min-width: 0; display: flex; flex-direction: column; background: #fff; }
.paneltools {
  height: 28px;
  flex: none;
  display: flex;
  align-items: center;
  gap: 15px;
  padding-left: 7px;
  background: #f2f5ff;
  border-bottom: 1px solid #a3a7b0;
  box-sizing: border-box;
}
.treewrap { flex: 1; min-height: 0; display: flex; }
.tree { flex: 1; min-width: 0; overflow: hidden; padding-left: 3px; }
.row { height: 18px; display: flex; align-items: center; white-space: nowrap; }
.cell { width: 19px; height: 18px; flex: none; position: relative; }
.c-l::before, .c-t::before, .c-e::before, .c-b::before {
  content: "";
  position: absolute;
  left: 9px;
  top: 0;
  bottom: 0;
  border-left: 1px dotted #777;
}
.c-e::before { bottom: 9px; }
.c-t::after, .c-e::after, .c-b::after {
  content: "";
  position: absolute;
  left: 9px;
  right: 0;
  top: 9px;
  border-top: 1px dotted #777;
}
.c-b b {
  position: absolute;
  z-index: 1;
  left: 5px;
  top: 5px;
  width: 9px;
  height: 9px;
  box-sizing: border-box;
  border: 1px solid #8e9aa8;
  background: linear-gradient(#fff, #dfe4ea);
}
.c-b b::after {
  content: "";
  position: absolute;
  left: 1px;
  right: 1px;
  top: 3px;
  height: 1px;
  background: #2e5aa8;
}
.bm { flex: none; margin-left: 1px; }
.label { margin: 1px 0 0 5px; padding: 0 2px; line-height: 17px; font-size: 12px; }
.label.on { background: #e3e3e3; }
.num { letter-spacing: .6px; }
.vbar { width: 15px; flex: none; background: #f0f0f0; position: relative; border-left: 1px solid #e4e4e4; box-sizing: border-box; }
.thumb-v {
  position: absolute;
  left: 0;
  right: 0;
  top: 244px;
  height: 77px;
  border: 1px solid #9b9b9b;
  border-radius: 2px;
  box-sizing: border-box;
  background: linear-gradient(90deg, #f4f4f4, #cfcfcf);
}
.thumb-v::after {
  content: "";
  position: absolute;
  left: 3px;
  right: 3px;
  top: 35px;
  height: 7px;
  background: repeating-linear-gradient(#555 0 1px, transparent 1px 3px);
}
.arr-down {
  position: absolute;
  left: 3px;
  bottom: 6px;
  border: 4px solid transparent;
  border-top: 4px solid #333;
  border-bottom: 0;
}
.hbar { height: 15px; flex: none; background: #f0f0f0; position: relative; margin-right: 15px; }
.thumb-h {
  position: absolute;
  left: 18px;
  width: 330px;
  top: 0;
  bottom: 0;
  border: 1px solid #9b9b9b;
  border-radius: 2px;
  box-sizing: border-box;
  background: linear-gradient(#f4f4f4, #cfcfcf);
}
.thumb-h::after {
  content: "";
  position: absolute;
  left: 158px;
  width: 7px;
  top: 3px;
  bottom: 3px;
  background: repeating-linear-gradient(90deg, #555 0 1px, transparent 1px 3px);
}
.arr-left, .arr-right {
  position: absolute;
  top: 3px;
  border: 4px solid transparent;
}
.arr-left { left: 5px; border-right: 4px solid #333; border-left: 0; }
.arr-right { right: 7px; border-left: 4px solid #333; border-right: 0; }

.docarea { flex: 1; display: flex; position: relative; background: #9c9c9c; }
.gutter.left { width: 119px; flex: none; }
.gutter.right { width: 112px; flex: none; }
.page { width: 683px; flex: none; background: #fff; }
.chart { display: block; }
.blackline { width: 4px; flex: none; background: #000; }
.docscroll { width: 18px; flex: none; background: #f0f0f0; position: relative; }
.topcap { height: 7px; background: #8ea2e6; }
.arr-up {
  position: absolute;
  left: 5px;
  top: 14px;
  border: 4px solid transparent;
  border-bottom: 4px solid #333;
  border-top: 0;
}
.thumb-doc {
  position: absolute;
  left: 2px;
  right: 1px;
  top: 176px;
  height: 15px;
  border: 1px solid #a0a0a0;
  border-radius: 2px;
  box-sizing: border-box;
  background: linear-gradient(90deg, #f6f6f6, #cfcfcf);
}
.arr-down.big { left: 5px; bottom: 4px; }

.mark { stroke: #9a9ad6; stroke-width: 1; stroke-dasharray: 2 2; fill: none; }
.marktext { font: 9px "Liberation Sans", sans-serif; fill: #444; text-anchor: middle; }
.trace { fill: none; stroke: #3a3a3a; stroke-width: 1.6; }
.siglabel { font: 700 11px "Liberation Sans", "Noto Sans CJK SC", sans-serif; letter-spacing: .4px; fill: #111; }
.bit { font: 700 8px "Liberation Sans", sans-serif; fill: #223; text-anchor: middle; }
.redi { font: 24px "Liberation Serif", serif; fill: #e8262a; text-anchor: middle; }

.watermark {
  position: absolute;
  left: 463px;
  top: 538px;
  display: flex;
  align-items: center;
  gap: 6px;
  color: #fff;
  font-family: "Noto Sans CJK SC", sans-serif;
  font-size: 33.5px;
  letter-spacing: .6px;
  white-space: nowrap;
  text-shadow: 1px 1px 1px #444, -1px 0 0 rgba(0, 0, 0, .25);
}
.watermark span { margin-top: -3px; }

.taskbar {
  height: 40px;
  flex: none;
  display: flex;
  align-items: flex-start;
  box-sizing: border-box;
  border-top: 1px solid #37475a;
  position: relative;
  background: linear-gradient(90deg, #a5bcd9 0, #a5bcd9 1050px, #7f95ae 1100px, #7b91aa 100%);
}
.orb {
  width: 36px;
  height: 36px;
  margin: 1px 0 0 9px;
  border-radius: 50%;
  display: flex;
  align-items: center;
  justify-content: center;
  border: 1px solid #1f3f66;
  box-sizing: border-box;
  background: radial-gradient(circle at 50% 30%, #6ab8e8, #1d5d96 60%, #103a66);
  flex: none;
}
.tbdots {
  width: 8px;
  height: 32px;
  margin: 4px 0 0 12px;
  flex: none;
  background: radial-gradient(circle, #3d4f63 1px, transparent 1.2px) 0 0 / 3px 3px;
}
.tbtn {
  width: 59px;
  height: 38px;
  flex: none;
  margin: 0 0 0 3px;
  display: flex;
  align-items: center;
  justify-content: center;
  border: 1px solid #8098b4;
  border-radius: 3px;
  box-sizing: border-box;
  background: linear-gradient(#c4d4e8, #a9c0dc);
}
.tbtn.wide { width: 51px; margin-left: 10px; }
.tbtn.plain { background: none; border-color: transparent; width: 58px; margin-left: 4px; }
.tbtn.active { background: linear-gradient(#d6e2f0, #b8cce4); }
.tbsep { width: 3px; height: 38px; flex: none; margin-left: 4px; border-left: 1px solid #8098b4; border-right: 1px solid #c4d4e8; box-sizing: border-box; }
.tray {
  position: absolute;
  left: 1080px;
  right: 0;
  top: 0;
  bottom: 0;
  display: flex;
  align-items: center;
  gap: 8px;
  color: #fff;
}
.tray .tbdots { margin: 0 0 0 12px; }
.ch { font: 11px "DejaVu Sans Mono", monospace; margin-left: 2px; margin-bottom: 6px; }
.trayup {
  border: 4px solid transparent;
  border-bottom: 5px solid #eef2f7;
  border-top: 0;
  margin: 0 5px 0 4px;
}
.battery { margin-left: 3px; }
.clock { text-align: center; font-size: 12px; line-height: 18px; margin-left: 5px; width: 70px; }
.showdesk {
  position: absolute;
  right: 0;
  top: 1px;
  bottom: 0;
  width: 14px;
  background: linear-gradient(#556a80, #68809a);
  border-left: 1px solid #46596e;
  box-shadow: inset 1px 0 0 #9fb2c6;
}
</style>

<style>
body { margin: 0; overflow: hidden; }
</style>
